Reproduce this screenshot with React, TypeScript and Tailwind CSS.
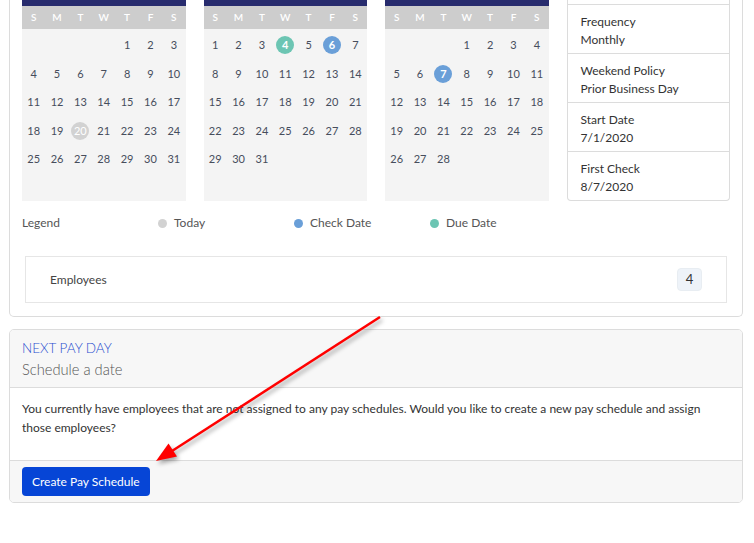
import React from "react";

type Mark = "today" | "due" | "check";

interface CalendarProps {
  offset: number;
  days: number;
  marks?: Record<number, Mark>;
}

const markStyles: Record<Mark, string> = {
  today: "bg-[#d2d2d2] text-white",
  due: "bg-[#6cc5b3] text-white font-bold",
  check: "bg-[#6a9fd8] text-white font-bold",
};

const Calendar = ({ offset, days, marks = {} }: CalendarProps) => {
  const cells: (number | null)[] = [
    ...Array(offset).fill(null),
    ...Array.from({ length: days }, (_, i) => i + 1),
  ];
  while (cells.length < 42) cells.push(null);

  return (
    <div className="bg-[#f4f4f4] h-[201px]">
      <div className="h-[6px] bg-[#272b6d]" />
      <div className="grid grid-cols-7 h-[23px] items-center bg-[#cdcdcd] text-[10px] font-semibold text-white">
        {"SMTWTFS".split("").map((d, i) => (
          <span key={i} className="text-center">
            {d}
          </span>
        ))}
      </div>
      <div className="grid grid-cols-7 pt-[2px] text-[11px] text-[#464d5c]">
        {cells.map((n, i) => {
          const mark = n ? marks[n] : undefined;
          return (
            <div key={i} className="h-[28.5px] flex items-center justify-center">
              {n &&
                (mark ? (
                  <span className={`w-[18px] h-[18px] rounded-full flex items-center justify-center ${markStyles[mark]}`}>
                    {n}
                  </span>
                ) : (
                  <span>{n}</span>
                ))}
            </div>
          );
        })}
      </div>
    </div>
  );
};

const details = [
  { label: "Frequency", value: "Monthly" },
  { label: "Weekend Policy", value: "Prior Business Day" },
  { label: "Start Date", value: "7/1/2020" },
  { label: "First Check", value: "8/7/2020" },
];

const legend = [
  { name: "Today", dot: "bg-[#d2d2d2]" },
  { name: "Check Date", dot: "bg-[#6a9fd8]" },
  { name: "Due Date", dot: "bg-[#6cc5b3]" },
];

const App = () => {
  return (
    <div className="relative w-[754px] h-[543px] bg-white overflow-hidden font-['Lato','Noto_Sans',sans-serif]">
      {/* schedule card (top is scrolled out of view) */}
      <div className="ml-[9px] w-[734px] border border-t-0 border-[#dcdcdc] rounded-b-[5px] px-[12px] pb-[13px]">
        <div className="grid grid-cols-4 gap-[18px]">
          <Calendar offset={4} days={31} marks={{ 20: "today" }} />
          <Calendar offset={0} days={31} marks={{ 4: "due", 6: "check" }} />
          <Calendar offset={3} days={28} marks={{ 7: "check" }} />
          <div className="h-[201px] border-x border-b border-[#dcdcdc] rounded-b-[4px] bg-white text-[12px] leading-[18px] text-[#333]">
            <div className="h-[5px] border-b border-[#dcdcdc]" />
            {details.map((d, i) => (
              <div
                key={d.label}
                className={`h-[49px] px-[13px] pt-[8px] ${i < details.length - 1 ? "border-b border-[#dcdcdc]" : ""}`}
              >
                <p>{d.label}</p>
                <p>{d.value}</p>
              </div>
            ))}
          </div>
        </div>

        <div className="flex items-center mt-[12px] h-[20px] text-[12px] text-[#555]">
          <span className="w-[136px]">Legend</span>
          {legend.map((l) => (
            <div key={l.name} className="w-[136px] flex items-center gap-[7px]">
              <span className={`w-[9px] h-[9px] rounded-full ${l.dot}`} />
              <span>{l.name}</span>
            </div>
          ))}
        </div>

        <div className="mt-[23px] mx-[3px] h-[47px] border border-[#e6e6e6] flex items-center justify-between px-[24px] text-[12px] text-[#444]">
          <span>Employees</span>
          <span className="w-[25px] h-[23px] rounded-[4px] bg-[#eef3f9] border border-[#e8edf2] flex items-center justify-center text-[13px] text-[#333]">
            4
          </span>
        </div>
      </div>

      {/* next pay day */}
      <div className="ml-[9px] mt-[12px] w-[734px] border border-[#dcdcdc] rounded-[5px] overflow-hidden">
        <div className="h-[58px] bg-[#f7f7f7] border-b border-[#dcdcdc] px-[12px] pt-[8px]">
          <p className="text-[13.5px] leading-[20px] font-light text-[#2a4fd0]">NEXT PAY DAY</p>
          <p className="text-[14.7px] leading-[23px] font-light text-[#555]">Schedule a date</p>
        </div>
        <div className="h-[72px] bg-white px-[12px] pt-[11px] text-[12px] leading-[19px] text-[#333]">
          You currently have employees that are not assigned to any pay schedules. Would you like to create a new pay
          schedule and assign those employees?
        </div>
        <div className="bg-[#f7f7f7] border-t border-[#dcdcdc] px-[12px] py-[6px]">
          <button className="h-[29px] px-[10px] rounded-[4px] bg-[#0645d6] text-white text-[12px]">
            Create Pay Schedule
          </button>
        </div>
      </div>

      {/* annotation arrow */}
      <svg
        className="absolute inset-0 pointer-events-none drop-shadow-[2px_3px_2px_rgba(0,0,0,0.35)]"
        width="754"
        height="543"
      >
        <line x1="380" y1="317" x2="172" y2="451" stroke="#ff0000" strokeWidth="2.5" />
        <polygon points="156,461 177,456.5 168.5,443.5" fill="#ff0000" />
      </svg>
    </div>
  );
};

export default App;
